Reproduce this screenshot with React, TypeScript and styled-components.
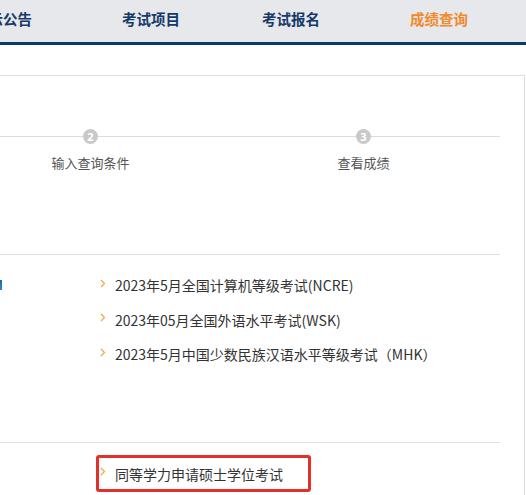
import React from "react";
import styled, { createGlobalStyle } from "styled-components";

const GlobalStyle = createGlobalStyle`
  html, body {
    margin: 0;
    padding: 0;
    background: #fff;
    overflow: hidden;
  }
  body {
    font-family: "Microsoft YaHei", "Noto Sans CJK SC", "Noto Sans", sans-serif;
    color: #333;
  }
  * {
    box-sizing: border-box;
  }
`;

const navItems = [
  { label: "公示公告", width: 148 },
  { label: "考试项目", width: 140 },
  { label: "考试报名", width: 148 },
  { label: "成绩查询", width: 120, active: true },
];

const steps = [
  { no: 1, label: "选择考试项目" },
  { no: 2, label: "输入查询条件" },
  { no: 3, label: "查看成绩" },
];

const exams = [
  "2023年5月全国计算机等级考试(NCRE)",
  "2023年05月全国外语水平考试(WSK)",
  "2023年5月中国少数民族汉语水平等级考试（MHK）",
];

export default function App() {
  return (
    <>
      <GlobalStyle />
      <Page>
        <Nav>
          <NavList>
            {navItems.map((item) => (
              <NavItem key={item.label} $width={item.width} $active={!!item.active}>
                {item.label}
              </NavItem>
            ))}
          </NavList>
        </Nav>

        <Panel>
          {/* 步骤条 */}
          <StepSection>
            <StepRow>
              {steps.map((s) => (
                <Step key={s.no}>
                  <StepDot>{s.no}</StepDot>
                  <StepLabel>{s.label}</StepLabel>
                </Step>
              ))}
            </StepRow>
          </StepSection>

          {/* 考试列表 */}
          <ListSection>
            <CategoryColumn>
              <CategoryItem $active>全国统考</CategoryItem>
            </CategoryColumn>
            <ExamList>
              {exams.map((e) => (
                <ExamItem key={e}>
                  <Chevron />
                  <span>{e}</span>
                </ExamItem>
              ))}
            </ExamList>
          </ListSection>

          <BottomSection>
            <CategoryColumn />
            <ExamList>
              <ExamItem $highlight>
                <Chevron />
                <span>同等学力申请硕士学位考试</span>
              </ExamItem>
            </ExamList>
          </BottomSection>
        </Panel>
      </Page>
    </>
  );
}

function Chevron() {
  return (
    <ChevronIcon width="6" height="9" viewBox="0 0 6 9">
      <polyline points="1,1 4.5,4.5 1,8" fill="none" stroke="#f0a13c" strokeWidth="1.1" />
    </ChevronIcon>
  );
}

const Page = styled.div`
  width: 526px;
  height: 495px;
  overflow: hidden;
`;

const Nav = styled.div`
  height: 45px;
  background: #e7e8ec;
  border-bottom: 3px solid #0e3a6a;
  overflow: hidden;
`;

const NavList = styled.div`
  display: flex;
  align-items: center;
  height: 42px;
  margin-left: -26px;
  width: 700px;
`;

const NavItem = styled.div<{ $width: number; $active: boolean }>`
  flex: 0 0 ${(p) => p.$width}px;
  font-size: 14.5px;
  font-weight: 700;
  line-height: 20px;
  padding-bottom: 4px;
  color: ${(p) => (p.$active ? "#f08a2c" : "#163a68")};
  white-space: nowrap;
`;

const Panel = styled.div`
  margin-top: 30px;
  margin-left: -342px;
  width: 867px;
  padding: 0 24px 0 23px;
  border-top: 1px solid #dedede;
  border-right: 1px solid #dedede;
  height: 460px;
`;

const StepSection = styled.div`
  padding: 53px 0 82px;
  border-bottom: 1px solid #e0e0e0;
`;

const StepRow = styled.div`
  display: flex;
  position: relative;

  &::before {
    content: "";
    position: absolute;
    left: 0;
    right: 0;
    top: 7px;
    height: 1px;
    background: #dcdcdc;
  }
`;

const Step = styled.div`
  flex: 1;
  display: flex;
  flex-direction: column;
  align-items: center;
  position: relative;
`;

const StepDot = styled.div`
  width: 15px;
  height: 15px;
  border-radius: 50%;
  background: #c9c9c9;
  color: #fff;
  font-size: 11px;
  font-weight: 700;
  line-height: 15px;
  text-align: center;
  font-family: "Noto Sans", sans-serif;
`;

const StepLabel = styled.div`
  margin-top: 10px;
  font-size: 13px;
  line-height: 18px;
  color: #555;
  white-space: nowrap;
`;

const ListSection = styled.div`
  display: flex;
  padding: 13px 0 0;
  height: 188px;
  border-bottom: 1px solid #e0e0e0;
`;

const BottomSection = styled.div`
  display: flex;
  padding-top: 12px;
`;

const CategoryColumn = styled.div`
  flex: 0 0 320px;
  display: flex;
  flex-direction: column;
`;

const CategoryItem = styled.div<{ $active?: boolean }>`
  height: 34px;
  display: flex;
  align-items: center;
  justify-content: flex-end;
  font-size: 14px;
  color: transparent;
  position: relative;

  &::after {
    content: "";
    display: ${(p) => (p.$active ? "block" : "none")};
    position: absolute;
    right: -1px;
    top: 12px;
    width: 2px;
    height: 10px;
    background: linear-gradient(#1d6aa3, #2a8cc9);
  }
`;

const ExamList = styled.div`
  display: flex;
  flex-direction: column;
  padding-left: 95px;
`;

const ExamItem = styled.div<{ $highlight?: boolean }>`
  display: flex;
  align-items: center;
  gap: 9px;
  height: ${(p) => (p.$highlight ? "37px" : "34.5px")};
  padding: ${(p) => (p.$highlight ? "0 25px 0 1px" : "0 0 0 4px")};
  border: ${(p) => (p.$highlight ? "3px solid #e3302a" : "none")};
  border-radius: ${(p) => (p.$highlight ? "3px" : "0")};
  font-size: 14px;
  color: #333;
  white-space: nowrap;
  align-self: flex-start;
`;

const ChevronIcon = styled.svg`
  flex: 0 0 auto;
  margin-top: -4px;
`;
